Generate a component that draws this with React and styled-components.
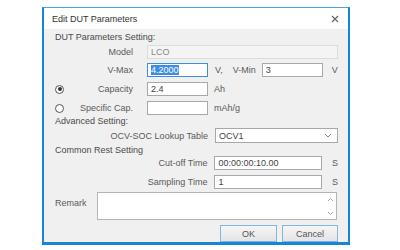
import styled, { createGlobalStyle } from 'styled-components';

const GlobalStyle = createGlobalStyle`
  body {
    margin: 0;
    background: #ffffff;
    font-family: "Liberation Sans", Arial, sans-serif;
  }
`;

function App() {
  return (
    <>
      <GlobalStyle />
      <Dialog>
        <TitleBar>
          <Title>Edit DUT Parameters</Title>
          <Close width="8" height="8" viewBox="0 0 8 8">
            <path d="M1 1 L7 7 M7 1 L1 7" stroke="#666" strokeWidth="1.2" />
          </Close>
        </TitleBar>
        <Body>
          <Row $h={16}>
            <Section>DUT Parameters Setting:</Section>
          </Row>
          <Row $h={14}>
            <Label $w={78}>Model</Label>
            <Field $w={191} $ml={14} $disabled>LCO</Field>
          </Row>
          <Row $h={14} $mt={4}>
            <Label $w={78}>V-Max</Label>
            <Field $w={61} $ml={14} $focused>
              <Selected>4.2000</Selected>
            </Field>
            <Unit $ml={7}>V,</Unit>
            <Unit $ml={10}>V-Min</Unit>
            <Field $w={61} $ml={6}>3</Field>
            <Unit $ml={9}>V</Unit>
          </Row>
          <Row $h={14} $mt={5}>
            <Label $w={78} $radio>
              <Radio $checked />
              Capacity
            </Label>
            <Field $w={61} $ml={14}>2.4</Field>
            <Unit $ml={6}>Ah</Unit>
          </Row>
          <Row $h={14} $mt={5}>
            <Label $w={78} $radio>
              <Radio />
              Specific Cap.
            </Label>
            <Field $w={61} $ml={14} />
            <Unit $ml={6}>mAh/g</Unit>
          </Row>
          <Row $h={12}>
            <Section>Advanced Setting:</Section>
          </Row>
          <Row $h={15} $mt={1}>
            <Label $w={153}>OCV-SOC Lookup Table</Label>
            <Select $ml={7}>
              OCV1
              <svg width="8" height="5" viewBox="0 0 8 5">
                <path d="M1 1 L4 4 L7 1" stroke="#888" strokeWidth="1" fill="none" />
              </svg>
            </Select>
          </Row>
          <Row $h={12} $mt={1}>
            <Section>Common Rest Setting</Section>
          </Row>
          <Row $h={14}>
            <Label $w={153}>Cut-off Time</Label>
            <Field $w={108} $ml={7}>00:00:00:10.00</Field>
            <Unit $ml={10}>S</Unit>
          </Row>
          <Row $h={14} $mt={5}>
            <Label $w={153}>Sampling Time</Label>
            <Field $w={108} $ml={7}>1</Field>
            <Unit $ml={10}>S</Unit>
          </Row>
          <Row $h={28} $mt={3}>
            <Label $w={42} $top>Remark</Label>
            <TextArea>
              <Scroll>
                <svg width="7" height="5" viewBox="0 0 7 5">
                  <path d="M1 4 L3.5 1.5 L6 4" stroke="#aaa" strokeWidth="1" fill="none" />
                </svg>
                <svg width="7" height="5" viewBox="0 0 7 5">
                  <path d="M1 1 L3.5 3.5 L6 1" stroke="#aaa" strokeWidth="1" fill="none" />
                </svg>
              </Scroll>
            </TextArea>
          </Row>
          <Buttons>
            <Button $w={57}>OK</Button>
            <Button $w={56}>Cancel</Button>
          </Buttons>
        </Body>
      </Dialog>
    </>
  );
}

export default App;

const Dialog = styled.div`
  box-sizing: border-box;
  margin: 7px 0 0 42px;
  width: 308px;
  height: 238px;
  border: 2px solid #1784d6;
  border-top: 1px solid #4aa0e2;
  border-bottom-width: 3px;
  background: #f0f0f0;
  display: flex;
  flex-direction: column;
`;

const TitleBar = styled.div`
  height: 21px;
  background: #ffffff;
  display: flex;
  align-items: center;
  justify-content: space-between;
  padding: 0 9px 0 8px;
`;

const Title = styled.span`
  font-size: 9px;
  color: #333;
`;

const Close = styled.svg`
  display: block;
`;

const Body = styled.div`
  display: flex;
  flex-direction: column;
  padding: 0 10px 0 11px;
`;

const Row = styled.div`
  display: flex;
  align-items: center;
  height: ${(p) => p.$h}px;
  margin-top: ${(p) => p.$mt || 0}px;
  font-size: 9px;
  color: #5a5a5a;
`;

const Section = styled.span`
  color: #4a4a4a;
`;

const Label = styled.div`
  width: ${(p) => p.$w}px;
  display: flex;
  align-items: center;
  justify-content: ${(p) => (p.$radio ? 'space-between' : p.$top ? 'flex-start' : 'flex-end')};
  align-self: ${(p) => (p.$top ? 'flex-start' : 'auto')};
  margin-top: ${(p) => (p.$top ? '6px' : '0')};
  white-space: nowrap;
`;

const Radio = styled.span`
  box-sizing: border-box;
  width: 9px;
  height: 9px;
  border-radius: 50%;
  border: 1px solid #555;
  background: #fff;
  display: flex;
  align-items: center;
  justify-content: center;

  &::after {
    content: '';
    width: 4px;
    height: 4px;
    border-radius: 50%;
    background: ${(p) => (p.$checked ? '#333' : 'transparent')};
  }
`;

const Field = styled.div`
  box-sizing: border-box;
  width: ${(p) => p.$w}px;
  height: 100%;
  margin-left: ${(p) => p.$ml || 0}px;
  padding-left: 3px;
  display: flex;
  align-items: center;
  background: ${(p) => (p.$disabled ? '#f4f4f4' : '#ffffff')};
  border: 1px solid
    ${(p) => (p.$focused ? '#3d8fd9' : p.$disabled ? '#dcdcdc' : '#a8a8a8')};
  color: ${(p) => (p.$disabled ? '#888' : '#444')};
  font-size: 9px;
`;

const Selected = styled.span`
  background: #3b8ee3;
  color: #fff;
  line-height: 10px;
`;

const Unit = styled.span`
  margin-left: ${(p) => p.$ml || 0}px;
  color: #5a5a5a;
`;

const Select = styled.div`
  box-sizing: border-box;
  width: 123px;
  height: 100%;
  margin-left: ${(p) => p.$ml || 0}px;
  padding: 0 5px 0 3px;
  display: flex;
  align-items: center;
  justify-content: space-between;
  background: #fff;
  border: 1px solid #a8a8a8;
  color: #444;
`;

const TextArea = styled.div`
  box-sizing: border-box;
  width: 240px;
  height: 100%;
  background: #fff;
  border: 1px solid #b4b4b4;
  display: flex;
  justify-content: flex-end;
`;

const Scroll = styled.div`
  width: 11px;
  display: flex;
  flex-direction: column;
  justify-content: space-between;
  align-items: center;
  padding: 4px 0 3px;
`;

const Buttons = styled.div`
  display: flex;
  justify-content: flex-end;
  gap: 5px;
  margin-top: 5px;
`;

const Button = styled.div`
  box-sizing: border-box;
  width: ${(p) => p.$w}px;
  height: 17px;
  display: flex;
  align-items: center;
  justify-content: center;
  border: 1px solid #7fb6e6;
  background: linear-gradient(#f6f6f6, #e4e4e4);
  color: #555;
  font-size: 9px;
`;
